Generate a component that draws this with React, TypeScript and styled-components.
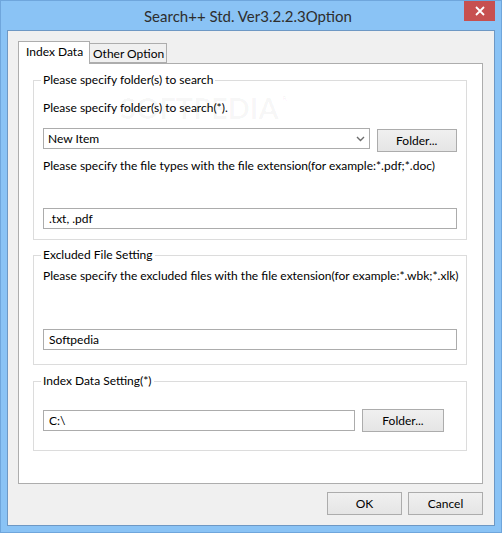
import styled, { createGlobalStyle } from "styled-components";

const GlobalStyle = createGlobalStyle`
  html, body {
    margin: 0;
    padding: 0;
  }
  body {
    width: 502px;
    height: 533px;
    overflow: hidden;
    font-family: Lato, "Noto Sans", sans-serif;
    font-size: 12px;
    color: #000;
  }
  * {
    box-sizing: border-box;
  }
`;

const App = () => {
  return (
    <>
      <GlobalStyle />
      <Frame>
        <TitleBar>
          <span />
          <Title>Search++ Std. Ver3.2.2.3Option</Title>
          <CloseButton aria-label="Close">
            <svg width="10" height="10" viewBox="0 0 10 10">
              <path d="M1 1 L9 9 M9 1 L1 9" stroke="#fff" strokeWidth="1.8" />
            </svg>
          </CloseButton>
        </TitleBar>

        <Client>
          <TabStrip>
            <Tab $active>Index Data</Tab>
            <Tab>Other Option</Tab>
          </TabStrip>

          <Panel>
            <Watermark>
              SOFTPEDIA<sup>®</sup>
            </Watermark>

            <Group $mt={0} $pb={10}>
              <Legend>Please specify folder(s) to search</Legend>
              <Label $mt={12}>Please specify folder(s) to search(*).</Label>
              <Row $mt={12}>
                <Combo $width={329}>
                  <FieldText>New Item</FieldText>
                  <ComboArrow>
                    <svg width="9" height="6" viewBox="0 0 9 6">
                      <path d="M1 1 L4.5 4.5 L8 1" fill="none" stroke="#6d6d6d" strokeWidth="1.4" />
                    </svg>
                  </ComboArrow>
                </Combo>
                <Button $width={81} $ml={7} $mt={1}>
                  Folder...
                </Button>
              </Row>
              <Label $mt={6}>
                Please specify the file types with the file extension(for example:*.pdf;*.doc)
              </Label>
              <TextBox $width={414} $mt={34}>
                .txt, .pdf
              </TextBox>
            </Group>

            <Group $mt={7} $pb={14}>
              <Legend>Excluded File Setting</Legend>
              <Label $mt={5}>
                Please specify the excluded files with the file extension(for example:*.wbk;*.xlk)
              </Label>
              <TextBox $width={414} $mt={45}>
                Softpedia
              </TextBox>
            </Group>

            <Group $mt={8} $pb={18}>
              <Legend>Index Data Setting(*)</Legend>
              <Row $mt={20}>
                <TextBox $width={312} $mt={1}>
                  C:\
                </TextBox>
                <Button $width={82} $ml={7}>
                  Folder...
                </Button>
              </Row>
            </Group>
          </Panel>

          <Footer>
            <Button $width={75}>OK</Button>
            <Button $width={75}>Cancel</Button>
          </Footer>
        </Client>
      </Frame>
    </>
  );
};

export default App;

const Frame = styled.div`
  width: 502px;
  height: 533px;
  background: #8ac3f5;
  border: 1px solid #6fa6dc;
  display: flex;
  flex-direction: column;
`;

const TitleBar = styled.div`
  height: 29px;
  display: grid;
  grid-template-columns: 1fr auto 1fr;
  align-items: start;
  padding-right: 6px;
`;

const Title = styled.div`
  font-size: 15px;
  line-height: 20px;
  color: #2e2e2e;
  padding-top: 5px;
  white-space: nowrap;
`;

const CloseButton = styled.div`
  justify-self: end;
  width: 31px;
  height: 20px;
  background: #c75050;
  display: flex;
  align-items: center;
  justify-content: center;
`;

const Client = styled.div`
  flex: 1;
  margin: 0 6px 6px 6px;
  border: 1px solid #6e98c4;
  background: #f0f0f0;
  padding: 10px 11px 10px 10px;
  display: flex;
  flex-direction: column;
`;

const TabStrip = styled.div`
  display: flex;
  align-items: flex-end;
  height: 22px;
  position: relative;
  z-index: 1;
`;

const Tab = styled.div<{ $active?: boolean }>`
  height: ${({ $active }) => ($active ? "23px" : "20px")};
  margin-bottom: ${({ $active }) => ($active ? "-1px" : "0")};
  width: ${({ $active }) => ($active ? "72px" : "77px")};
  padding: ${({ $active }) => ($active ? "2px 0 0 7px" : "2px 0 0 3px")};
  line-height: 16px;
  background: ${({ $active }) => ($active ? "#fff" : "#f0f0f0")};
  border: 1px solid #adadad;
  border-bottom: ${({ $active }) => ($active ? "none" : "1px solid #adadad")};
  border-left: ${({ $active }) => ($active ? "1px solid #adadad" : "none")};
  white-space: nowrap;
`;

const Panel = styled.div`
  flex: 1;
  position: relative;
  background: #fff;
  border: 1px solid #adadad;
  padding: 8px 15px 0 14px;
  display: flex;
  flex-direction: column;
`;

const Watermark = styled.div`
  position: absolute;
  left: 101px;
  top: 29px;
  font-size: 29px;
  line-height: 1;
  font-weight: 700;
  color: rgba(0, 0, 0, 0.035);
  pointer-events: none;
  white-space: nowrap;
  sup {
    font-size: 10px;
    vertical-align: top;
    margin-left: 2px;
  }
`;

const Group = styled.fieldset<{ $mt: number; $pb: number }>`
  margin: ${({ $mt }) => $mt}px 0 0 0;
  border: 1px solid #dcdcdc;
  padding: 0 9px ${({ $pb }) => $pb}px 9px;
  min-width: 0;
  display: flex;
  flex-direction: column;
  position: relative;
`;

const Legend = styled.legend`
  padding: 0 2px;
  margin-left: -2px;
  line-height: 16px;
  color: #000;
`;

const Label = styled.div<{ $mt: number }>`
  margin-top: ${({ $mt }) => $mt}px;
  line-height: 16px;
  white-space: nowrap;
`;

const Row = styled.div<{ $mt: number }>`
  margin-top: ${({ $mt }) => $mt}px;
  display: flex;
  align-items: flex-start;
`;

const Combo = styled.div<{ $width: number }>`
  width: ${({ $width }) => $width}px;
  height: 21px;
  border: 1px solid #acacac;
  background: #fff;
  display: flex;
  align-items: center;
`;

const FieldText = styled.span`
  flex: 1;
  padding-left: 4px;
  line-height: 16px;
`;

const ComboArrow = styled.span`
  width: 17px;
  height: 19px;
  display: flex;
  align-items: center;
  justify-content: center;
`;

const TextBox = styled.div<{ $width: number; $mt: number }>`
  width: ${({ $width }) => $width}px;
  height: 21px;
  margin-top: ${({ $mt }) => $mt}px;
  border: 1px solid #acacac;
  background: #fff;
  padding-left: 5px;
  line-height: 19px;
  white-space: nowrap;
`;

const Button = styled.div<{ $width: number; $ml?: number; $mt?: number }>`
  width: ${({ $width }) => $width}px;
  height: 23px;
  margin-left: ${({ $ml }) => $ml ?? 0}px;
  margin-top: ${({ $mt }) => $mt ?? 0}px;
  border: 1px solid #acacac;
  background: linear-gradient(#f0f0f0, #e5e5e5);
  display: flex;
  align-items: center;
  justify-content: center;
  line-height: 16px;
  color: #000;
`;

const Footer = styled.div`
  margin-top: 8px;
  display: flex;
  justify-content: flex-end;
  gap: 6px;
`;
